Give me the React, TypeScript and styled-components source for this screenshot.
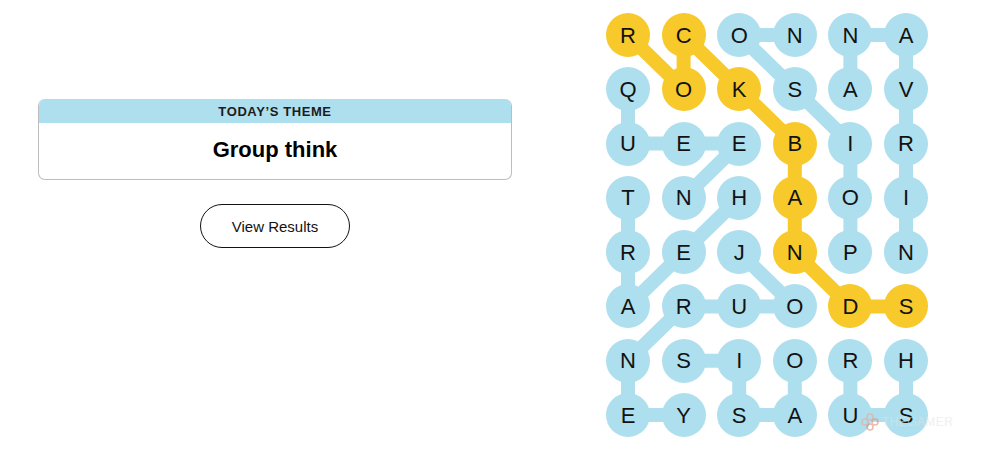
import styled, { createGlobalStyle } from "styled-components";

const GlobalStyle = createGlobalStyle`
  html, body {
    margin: 0;
    padding: 0;
    background: #ffffff;
    font-family: "Liberation Sans", Arial, sans-serif;
    color: #121212;
  }
`;

// board geometry
const CELL = 44;
const COL_STEP = 55.6;
const ROW_STEP = 54.3;
const BLUE = "#aedfee";
const YELLOW = "#f7c92b";

const LETTERS = [
  "RCONNA",
  "QOKSAV",
  "UEEBIR",
  "TNHAOI",
  "REJNPN",
  "ARUODS",
  "NSIORH",
  "EYSAUS",
];

// each word is a path of [row, col]
const WORDS: { cells: [number, number][]; spangram?: boolean }[] = [
  { cells: [[0, 0], [1, 1], [0, 1], [1, 2], [2, 3], [3, 3], [4, 3], [5, 4], [5, 5]], spangram: true },
  { cells: [[4, 4], [3, 4], [2, 4], [1, 3], [0, 2], [0, 3]] },
  { cells: [[4, 5], [3, 5], [2, 5], [1, 5], [0, 5], [0, 4], [1, 4]] },
  { cells: [[1, 0], [2, 0], [2, 1], [2, 2], [3, 1]] },
  { cells: [[3, 2], [4, 1], [5, 0], [4, 0], [3, 0]] },
  { cells: [[4, 2], [5, 3], [5, 2], [5, 1], [6, 0], [7, 0], [7, 1]] },
  { cells: [[6, 3], [7, 3], [7, 2], [6, 2], [6, 1]] },
  { cells: [[6, 4], [7, 4], [7, 5], [6, 5]] },
];

const spangramCells = new Set(
  WORDS.filter((w) => w.spangram).flatMap((w) => w.cells.map(([r, c]) => `${r}-${c}`))
);

const Page = styled.div`
  display: flex;
  align-items: flex-start;
  width: 989px;
  height: 463px;
  overflow: hidden;
  position: relative;
`;

const LeftColumn = styled.div`
  width: 474px;
  margin-left: 38px;
  padding-top: 99px;
  display: flex;
  flex-direction: column;
  align-items: center;
`;

const ThemeCard = styled.div`
  width: 100%;
  box-sizing: border-box;
  border: 1px solid #bdbdbd;
  border-top: none;
  border-radius: 7px;
  overflow: hidden;
  display: flex;
  flex-direction: column;
`;

const ThemeHeader = styled.div`
  height: 24px;
  background: ${BLUE};
  display: flex;
  align-items: center;
  justify-content: center;
  font-size: 13px;
  font-weight: 700;
  letter-spacing: 0.6px;
  color: #1c1c1c;
  text-transform: uppercase;
`;

const ThemeTitle = styled.div`
  height: 56px;
  display: flex;
  align-items: center;
  justify-content: center;
  font-size: 22px;
  font-weight: 700;
  color: #000;
  padding-bottom: 3px;
  box-sizing: border-box;
`;

const ResultsButton = styled.button`
  margin-top: 24px;
  width: 150px;
  height: 44px;
  border: 1px solid #121212;
  border-radius: 22px;
  background: #fff;
  font-family: "Liberation Sans", Arial, sans-serif;
  font-size: 15px;
  color: #121212;
  cursor: pointer;
`;

const BoardWrap = styled.div`
  margin-left: 94px;
  margin-top: 13px;
  position: relative;
  width: ${5 * COL_STEP + CELL}px;
  height: ${7 * ROW_STEP + CELL}px;
`;

const Connectors = styled.svg`
  position: absolute;
  inset: 0;
  overflow: visible;
`;

const LetterGrid = styled.div`
  position: relative;
  display: grid;
  grid-template-columns: repeat(6, ${CELL}px);
  grid-auto-rows: ${CELL}px;
  column-gap: ${COL_STEP - CELL}px;
  row-gap: ${ROW_STEP - CELL}px;
`;

const Letter = styled.div<{ $spangram: boolean }>`
  width: ${CELL}px;
  height: ${CELL}px;
  border-radius: 50%;
  background: ${(p) => (p.$spangram ? YELLOW : BLUE)};
  display: flex;
  align-items: center;
  justify-content: center;
  font-size: 22px;
  color: #121212;
  padding-top: 1px;
  box-sizing: border-box;
`;

const Watermark = styled.div`
  position: absolute;
  left: 861px;
  top: 413px;
  display: flex;
  align-items: center;
  gap: 3px;
  opacity: 0.55;
`;

const WatermarkText = styled.span`
  font-family: "Liberation Sans", Arial, sans-serif;
  font-size: 12px;
  letter-spacing: 0.4px;
  color: #e4e4e4;
`;

const center = ([r, c]: [number, number]) => ({
  x: CELL / 2 + c * COL_STEP,
  y: CELL / 2 + r * ROW_STEP,
});

function App() {
  return (
    <Page>
      <GlobalStyle />
      <LeftColumn>
        <ThemeCard>
          <ThemeHeader>Today’s theme</ThemeHeader>
          <ThemeTitle>Group think</ThemeTitle>
        </ThemeCard>
        <ResultsButton>View Results</ResultsButton>
      </LeftColumn>

      <BoardWrap>
        <Connectors width="100%" height="100%">
          {WORDS.map((w, i) => (
            <polyline
              key={i}
              points={w.cells.map((cell) => {
                const p = center(cell);
                return `${p.x},${p.y}`;
              }).join(" ")}
              fill="none"
              stroke={w.spangram ? YELLOW : BLUE}
              strokeWidth={14}
              strokeLinejoin="round"
            />
          ))}
        </Connectors>
        <LetterGrid>
          {LETTERS.flatMap((row, r) =>
            row.split("").map((ch, c) => (
              <Letter key={`${r}-${c}`} $spangram={spangramCells.has(`${r}-${c}`)}>
                {ch}
              </Letter>
            ))
          )}
        </LetterGrid>
      </BoardWrap>

      <Watermark>
        <svg width="18" height="18" viewBox="0 0 18 18">
          <circle cx="9" cy="4" r="3" fill="none" stroke="#f0a58a" strokeWidth="1.6" />
          <circle cx="4" cy="9" r="3" fill="none" stroke="#f0a58a" strokeWidth="1.6" />
          <circle cx="14" cy="9" r="3" fill="none" stroke="#e8826a" strokeWidth="1.6" />
          <circle cx="9" cy="14" r="3" fill="none" stroke="#e8826a" strokeWidth="1.6" />
        </svg>
        <WatermarkText>THEGAMER</WatermarkText>
      </Watermark>
    </Page>
  );
}

export default App;
